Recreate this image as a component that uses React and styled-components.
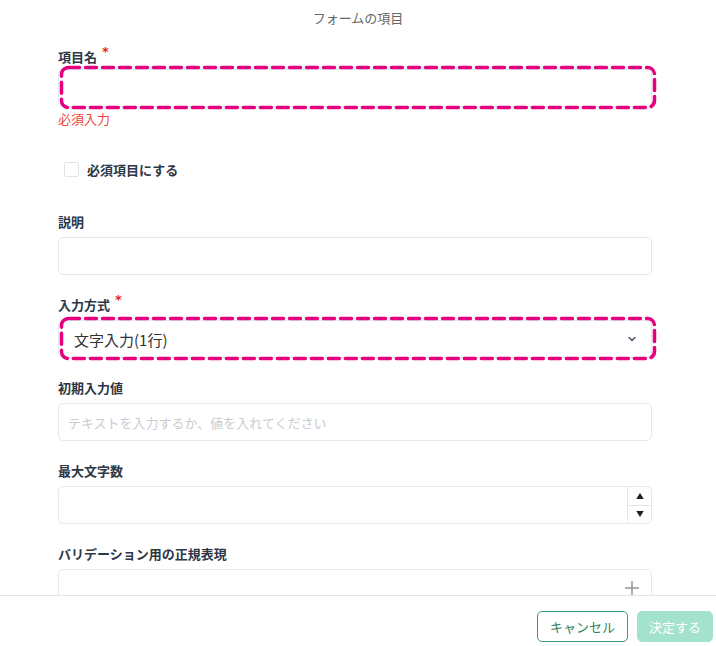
import React from 'react';
import styled, { createGlobalStyle } from 'styled-components';

const GlobalStyle = createGlobalStyle`
  html, body {
    margin: 0;
    padding: 0;
    background: #fff;
  }
  body {
    font-family: "Noto Sans CJK JP", "Noto Sans", sans-serif;
  }
`;

const COLORS = {
  text: '#2d3748',
  border: '#e2e8f0',
  highlight: '#e6007e',
  error: '#f0443a',
  green: '#3f9c7a',
  greenLight: '#a3e2cc',
};

const Page = styled.div`
  width: 716px;
  height: 646px;
  display: flex;
  flex-direction: column;
  overflow: hidden;
`;

const Content = styled.div`
  flex: 1;
  min-height: 0;
  overflow: hidden;
  padding: 8px 64px 0 58px;
`;

const Title = styled.div`
  text-align: center;
  font-size: 13px;
  line-height: 20px;
  color: #666;
  margin-bottom: 19px;
  padding-left: 6px;
`;

const Field = styled.div`
  margin-bottom: ${(p) => p.$gap ?? 20}px;
`;

const Label = styled.div`
  font-size: 13px;
  line-height: 20px;
  font-weight: 700;
  color: ${COLORS.text};
  margin-bottom: ${(p) => p.$mb ?? 5}px;
  display: flex;
  align-items: flex-start;
`;

const Required = styled.span`
  color: #e8261b;
  font-size: 13px;
  line-height: 13px;
  margin-left: 5px;
  margin-top: -2px;
  font-family: "DejaVu Sans", sans-serif;
  font-weight: 700;
`;

const Box = styled.div`
  position: relative;
  height: ${(p) => p.$height ?? 38}px;
  box-sizing: border-box;
  border: 1px solid ${COLORS.border};
  border-radius: 5px;
  background: #fff;
  display: flex;
  align-items: ${(p) => (p.$top ? 'flex-start' : 'center')};
`;

const DashOverlay = styled.svg`
  position: absolute;
  top: -4px;
  left: 1px;
  width: calc(100% + 4px);
  height: calc(100% + 7px);
  overflow: visible;
  pointer-events: none;
`;

const Highlight = () => (
  <DashOverlay>
    <rect
      x="1.5"
      y="1.5"
      width="calc(100% - 3px)"
      height="calc(100% - 3px)"
      rx="7"
      fill="none"
      stroke={COLORS.highlight}
      strokeWidth="3.5"
      strokeDasharray="11 6"
      strokeLinecap="round"
    />
  </DashOverlay>
);

const Placeholder = styled.span`
  padding-left: 9px;
  font-size: 13px;
  color: #c8ccd2;
`;

const SelectValue = styled.span`
  flex: 1;
  padding-left: 15px;
  font-size: 15px;
  color: #333;
`;

const IconSlot = styled.span`
  width: 24px;
  display: flex;
  align-items: center;
  justify-content: center;
  margin-right: ${(p) => p.$mr ?? 8}px;
  margin-top: ${(p) => p.$mt ?? 0}px;
  margin-left: auto;
  color: ${(p) => p.$color ?? '#4a5568'};
`;

const Spinner = styled.div`
  margin-left: auto;
  width: 23px;
  height: 100%;
  border-left: 1px solid ${COLORS.border};
  display: flex;
  flex-direction: column;
`;

const SpinButton = styled.div`
  flex: 1;
  display: flex;
  align-items: center;
  justify-content: center;
  & + & {
    border-top: 1px solid ${COLORS.border};
  }
`;

const ErrorText = styled.div`
  margin-top: 2px;
  font-size: 13px;
  line-height: 20px;
  color: ${COLORS.error};
`;

const CheckRow = styled.label`
  display: flex;
  align-items: center;
  gap: 8px;
  padding-left: 6px;
  margin: 30px 0 33px;
  height: 20px;
  font-size: 13px;
  font-weight: 700;
  color: ${COLORS.text};
`;

const Checkbox = styled.span`
  width: 13px;
  height: 13px;
  border: 1px solid #dfe4ea;
  border-radius: 2px;
  background: #fff;
`;

const Footer = styled.div`
  flex: 0 0 auto;
  height: 50px;
  border-top: 1px solid #e5e5e5;
  display: flex;
  align-items: center;
  justify-content: flex-end;
  gap: 9px;
  padding: 0 3px 0 0;
  background: #fff;
`;

const Button = styled.button`
  height: 31px;
  padding: 0 ${(p) => (p.$primary ? 11 : 12)}px;
  border-radius: 5px;
  font-family: inherit;
  font-size: 13px;
  margin-top: 10px;
  border: 1.5px solid ${(p) => (p.$primary ? COLORS.greenLight : COLORS.green)};
  background: ${(p) => (p.$primary ? COLORS.greenLight : '#fff')};
  color: ${(p) => (p.$primary ? '#fff' : '#2f7f62')};
  cursor: ${(p) => (p.$primary ? 'not-allowed' : 'pointer')};
`;

const Chevron = () => (
  <svg width="12" height="12" viewBox="0 0 24 24" fill="none" stroke="currentColor" strokeWidth="3" strokeLinecap="round" strokeLinejoin="round">
    <polyline points="6 9 12 15 18 9" />
  </svg>
);

const Triangle = ({ down }) => (
  <svg width="8" height="6" viewBox="0 0 10 8">
    <polygon points={down ? '0,0 10,0 5,8' : '0,8 10,8 5,0'} fill="#1a202c" />
  </svg>
);

const Plus = () => (
  <svg width="16" height="16" viewBox="0 0 16 16" stroke="currentColor" strokeWidth="1.4">
    <line x1="8" y1="1" x2="8" y2="15" />
    <line x1="1" y1="8" x2="15" y2="8" />
  </svg>
);

export default function App() {
  return (
    <Page>
      <GlobalStyle />
      <Content>
        <Title>フォームの項目</Title>

        <Field $gap={0}>
          <Label $mb={2}>
            項目名<Required>*</Required>
          </Label>
          <Box>
            <Highlight />
          </Box>
          <ErrorText>必須入力</ErrorText>
        </Field>

        <CheckRow>
          <Checkbox />
          必須項目にする
        </CheckRow>

        <Field>
          <Label>説明</Label>
          <Box />
        </Field>

        <Field>
          <Label>
            入力方式<Required>*</Required>
          </Label>
          <Box>
            <SelectValue>文字入力(1行)</SelectValue>
            <IconSlot $mr={7}>
              <Chevron />
            </IconSlot>
            <Highlight />
          </Box>
        </Field>

        <Field>
          <Label>初期入力値</Label>
          <Box>
            <Placeholder>テキストを入力するか、値を入れてください</Placeholder>
          </Box>
        </Field>

        <Field>
          <Label>最大文字数</Label>
          <Box>
            <Spinner>
              <SpinButton>
                <Triangle />
              </SpinButton>
              <SpinButton>
                <Triangle down />
              </SpinButton>
            </Spinner>
          </Box>
        </Field>

        <Field>
          <Label>バリデーション用の正規表現</Label>
          <Box $height={60} $top>
            <IconSlot $mr={7} $mt={10} $color="#8a8f96">
              <Plus />
            </IconSlot>
          </Box>
        </Field>
      </Content>

      <Footer>
        <Button>キャンセル</Button>
        <Button $primary>決定する</Button>
      </Footer>
    </Page>
  );
}
